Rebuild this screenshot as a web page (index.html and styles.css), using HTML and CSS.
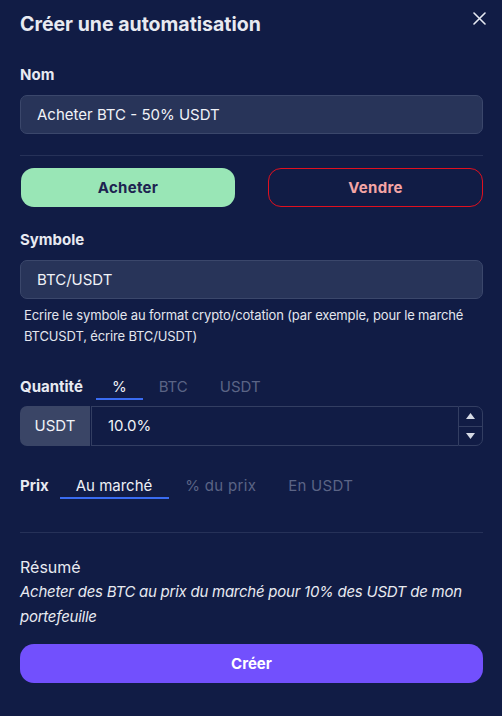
FILE: index.html
```html
<!DOCTYPE html>
<html lang="fr">
<head>
    <meta charset="UTF-8">
    <meta name="viewport" content="width=device-width, initial-scale=1.0">
    <title>Créer une automatisation</title>
    <link rel="stylesheet" href="styles.css">
</head>
<body>
    <div class="modal">
        <!-- Header -->
        <div class="modal-header">
            <h1>Créer une automatisation</h1>
            <button class="close" aria-label="Fermer">
                <svg width="13" height="13" viewBox="0 0 13 13">
                    <path d="M1 1 L12 12 M12 1 L1 12" stroke="#e6e9f2" stroke-width="1.6" stroke-linecap="round"/>
                </svg>
            </button>
        </div>

        <!-- Nom -->
        <label class="label">Nom</label>
        <div class="input">Acheter BTC - 50% USDT</div>

        <hr class="divider">

        <!-- Side -->
        <div class="sides">
            <button class="side side-buy">Acheter</button>
            <button class="side side-sell">Vendre</button>
        </div>

        <!-- Symbole -->
        <label class="label label-symbol">Symbole</label>
        <div class="input">BTC/USDT</div>
        <p class="hint">Ecrire le symbole au format crypto/cotation (par exemple, pour le marché BTCUSDT, écrire BTC/USDT)</p>

        <!-- Quantité -->
        <div class="tab-row tab-row-qty">
            <span class="tab-label">Quantité</span>
            <span class="tab active tab-pct">%</span>
            <span class="tab">BTC</span>
            <span class="tab">USDT</span>
        </div>
        <div class="number-group">
            <span class="prefix">USDT</span>
            <span class="number-value">10.0%</span>
            <span class="spinner">
                <span class="spin-btn">
                    <svg width="9" height="6" viewBox="0 0 9 6"><path d="M0 6 L4.5 0 L9 6 Z" fill="#d5d9e4"/></svg>
                </span>
                <span class="spin-btn">
                    <svg width="9" height="6" viewBox="0 0 9 6"><path d="M0 0 L9 0 L4.5 6 Z" fill="#d5d9e4"/></svg>
                </span>
            </span>
        </div>

        <!-- Prix -->
        <div class="tab-row tab-row-price">
            <span class="tab-label">Prix</span>
            <span class="tab active tab-market">Au marché</span>
            <span class="tab">% du prix</span>
            <span class="tab">En USDT</span>
        </div>

        <hr class="divider divider-bottom">

        <!-- Résumé -->
        <h2 class="summary-title">Résumé</h2>
        <p class="summary">Acheter des BTC au prix du marché pour 10% des USDT de mon portefeuille</p>

        <button class="submit">Créer</button>
    </div>
</body>
</html>
```

FILE: styles.css
```css
/* General Styling */
body {
    background-color: #111c45;
    margin: 0;
    padding: 0;
    font-family: Inter, "Noto Sans", sans-serif;
    color: #e8eaf1;
}

.modal {
    width: 502px;
    height: 716px;
    box-sizing: border-box;
    padding: 12px 19px 0 20px;
}

/* Header */
.modal-header {
    display: flex;
    justify-content: space-between;
    align-items: flex-start;
}

.modal-header h1 {
    margin: 0;
    font-size: 19.5px;
    font-weight: 700;
    line-height: 24px;
}

.close {
    background: none;
    border: none;
    padding: 0;
    margin: 0 -3px 0 0;
    width: 13px;
    height: 13px;
    display: flex;
}

/* Labels and inputs */
.label {
    display: block;
    margin-top: 28px;
    font-size: 15px;
    font-weight: 700;
    line-height: 22px;
}

.input {
    margin-top: 9px;
    height: 37px;
    line-height: 37px;
    padding: 0 16px;
    background-color: #283459;
    border: 1px solid #3b476b;
    border-radius: 7px;
    font-size: 15px;
    color: #f0f2f7;
}

.divider {
    border: none;
    border-top: 1px solid #263158;
    margin: 21px 0 0 0;
}

/* Buy / Sell */
.sides {
    display: grid;
    grid-template-columns: 1fr 1fr;
    gap: 33px;
    margin-top: 12px;
}

.side {
    height: 39px;
    border-radius: 13px;
    font-family: inherit;
    font-size: 15px;
    font-weight: 700;
    letter-spacing: 0.3px;
}

.side-buy {
    background-color: #99e6b6;
    border: none;
    color: #1d2350;
    margin-left: 1px;
}

.side-sell {
    background-color: transparent;
    border: 1px solid #e0101f;
    color: #f4a5a5;
}

.label-symbol {
    margin-top: 22px;
}

.hint {
    margin: 6px 0 0 4px;
    font-size: 13px;
    line-height: 21px;
    color: #e3e6ee;
    letter-spacing: -0.15px;
}

/* Tabs */
.tab-row {
    display: flex;
    align-items: flex-end;
    font-size: 15px;
    line-height: 22px;
}

.tab-row-qty {
    margin-top: 29px;
}

.tab-row-price {
    margin-top: 29px;
}

.tab-label {
    font-weight: 700;
    padding-bottom: 2px;
}

.tab {
    color: #5b6485;
    padding: 0 16px;
    border-bottom: 2px solid transparent;
}

.tab.active {
    color: #eef0f6;
    border-bottom-color: #3a6cf2;
}

.tab-pct {
    margin-left: 13px;
}

.tab-market {
    margin-left: 11px;
    padding: 0 17px 0 16px;
}

.tab-market ~ .tab {
    letter-spacing: 0.3px;
}

/* Number input */
.number-group {
    display: flex;
    margin-top: 6px;
    height: 40px;
    border-radius: 7px;
}

.prefix {
    width: 70px;
    background-color: #3a4566;
    border-radius: 7px 0 0 7px;
    text-align: center;
    line-height: 40px;
    font-size: 15px;
    color: #f0f2f7;
}

.number-value {
    flex: 1;
    border: 1px solid #333e62;
    border-right: none;
    margin-left: 1px;
    padding-left: 16px;
    line-height: 38px;
    font-size: 15px;
    color: #f0f2f7;
}

.spinner {
    width: 23px;
    display: flex;
    flex-direction: column;
    border: 1px solid #333e62;
    border-radius: 0 7px 7px 0;
}

.spin-btn {
    flex: 1;
    display: flex;
    align-items: center;
    justify-content: center;
}

.spin-btn + .spin-btn {
    border-top: 1px solid #333e62;
}

.divider-bottom {
    margin-top: 33px;
}

/* Summary */
.summary-title {
    margin: 23px 0 0 0;
    font-size: 16px;
    font-weight: 400;
    line-height: 22px;
}

.summary {
    margin: 1px 0 0 0;
    font-size: 15px;
    font-style: italic;
    line-height: 25px;
    letter-spacing: -0.25px;
}

.submit {
    display: block;
    width: 100%;
    margin-top: 15px;
    height: 39px;
    border: none;
    border-radius: 14px;
    background-color: #7250fd;
    color: #ffffff;
    font-family: inherit;
    font-size: 15px;
    font-weight: 700;
}
```
